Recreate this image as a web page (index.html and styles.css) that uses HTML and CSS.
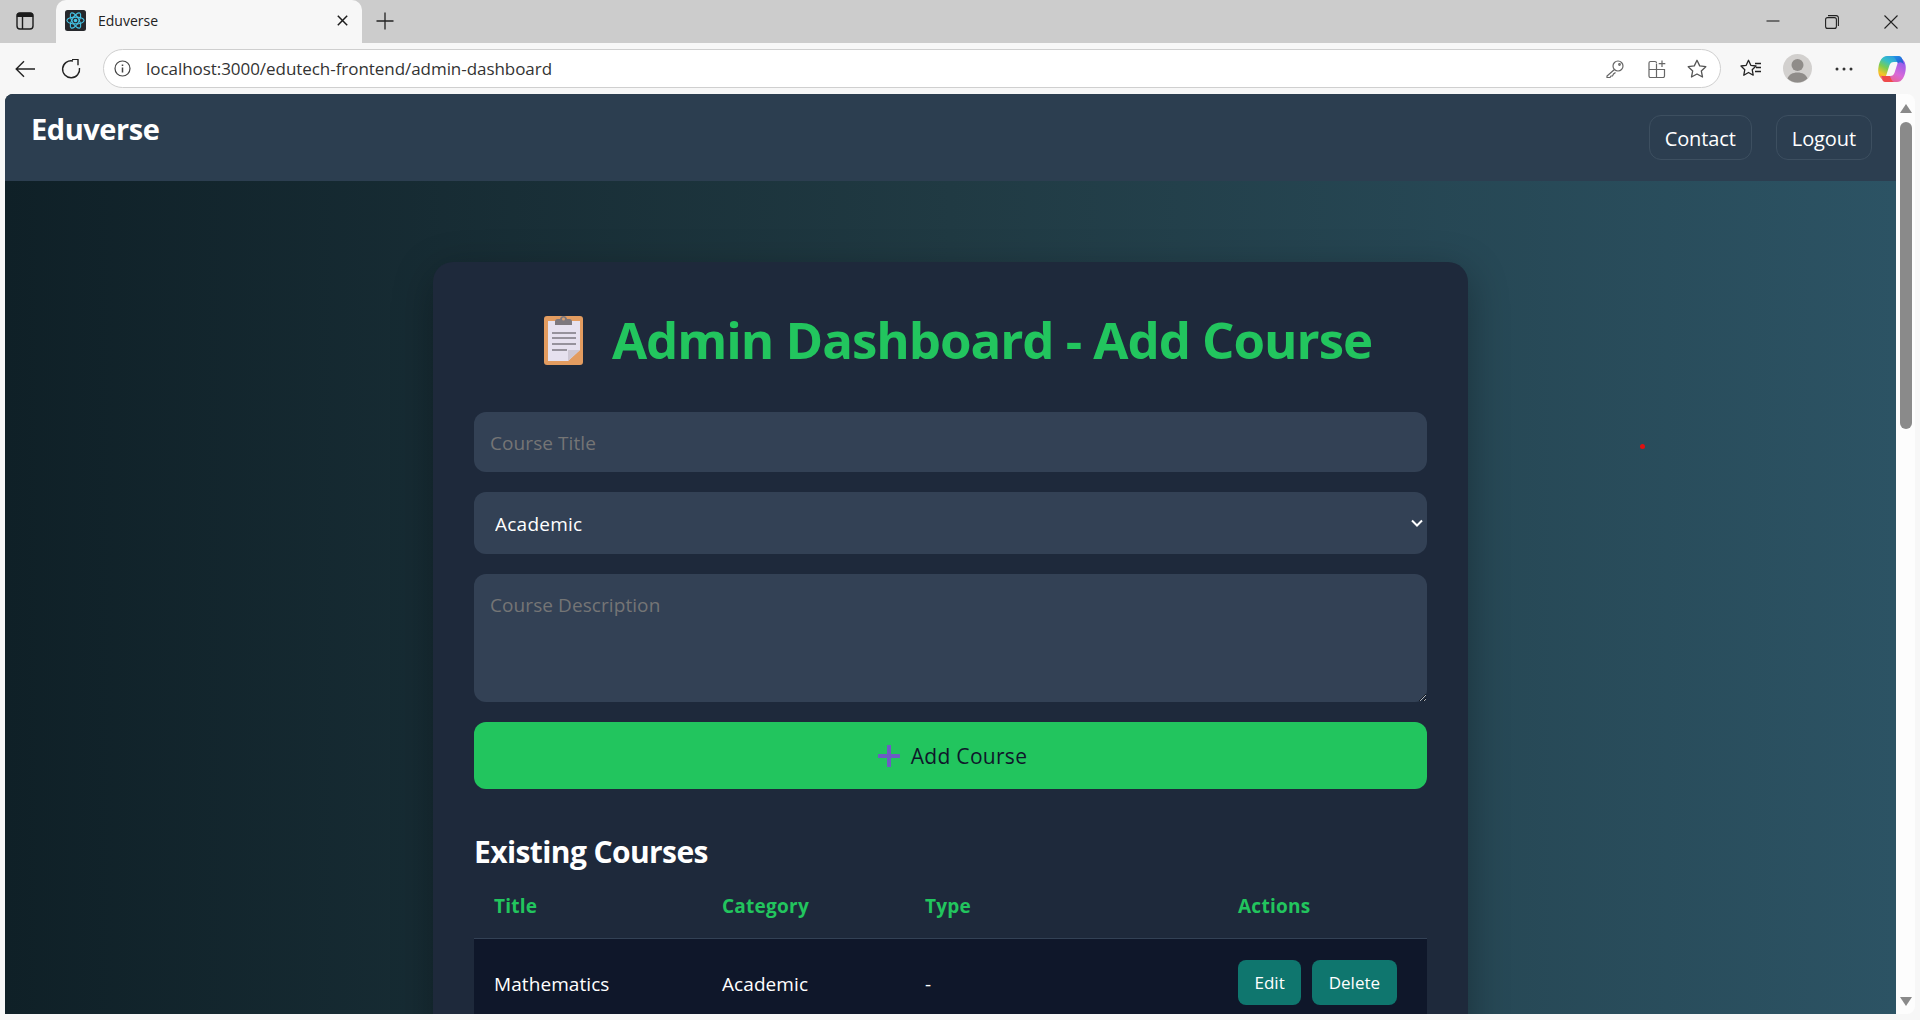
FILE: index.html
```html
<!DOCTYPE html>
<html lang="en">
<head>
  <meta charset="UTF-8" />
  <title>Eduverse</title>
  <link rel="stylesheet" href="styles.css">
</head>
<body>

<div class="browser">
  <!-- tab strip -->
  <div class="tabstrip">
    <svg class="sidebar-icon" width="18" height="18" viewBox="0 0 18 18" fill="none" stroke="#1c1c1c" stroke-width="1.4">
      <rect x="1" y="1" width="16" height="16" rx="3"/>
      <path d="M1.5 4.2h15V2.6L15 1.4H3L1.5 2.6z" fill="#1c1c1c"/>
      <path d="M6.5 4v13"/>
    </svg>
    <div class="tab">
      <svg class="favicon" width="21" height="21" viewBox="0 0 21 21" fill="none" stroke="#45c4e6" stroke-width="1.1">
        <rect width="21" height="21" rx="2.5" fill="#26282c" stroke="none"/>
        <ellipse cx="10.5" cy="10.5" rx="8.6" ry="3.4"/>
        <ellipse cx="10.5" cy="10.5" rx="8.6" ry="3.4" transform="rotate(60 10.5 10.5)"/>
        <ellipse cx="10.5" cy="10.5" rx="8.6" ry="3.4" transform="rotate(120 10.5 10.5)"/>
        <circle cx="10.5" cy="10.5" r="1.8" fill="#45c4e6" stroke="none"/>
      </svg>
      <span class="tab-title">Eduverse</span>
      <svg class="tab-close" width="11" height="11" viewBox="0 0 11 11" stroke="#1c1c1c" stroke-width="1.5"><path d="M.8.8l9.4 9.4M10.2.8L.8 10.2"/></svg>
    </div>
    <svg class="new-tab" width="18" height="18" viewBox="0 0 18 18" stroke="#222" stroke-width="1.3"><path d="M9 .5v17M.5 9h17"/></svg>
    <div class="window-controls">
      <svg width="14" height="14" viewBox="0 0 14 14" stroke="#222" stroke-width="1.1"><path d="M.5 6h13"/></svg>
      <svg width="14" height="14" viewBox="0 0 14 14" fill="none" stroke="#222" stroke-width="1.1"><rect x=".6" y="2.6" width="10.8" height="10.8" rx="2"/><path d="M3 .6h8.2a2.2 2.2 0 0 1 2.2 2.2V11"/></svg>
      <svg width="14" height="14" viewBox="0 0 14 14" stroke="#222" stroke-width="1.1"><path d="M.5.5l13 13M13.500.5l-13 13"/></svg>
    </div>
  </div>

  <!-- address bar row -->
  <div class="toolbar">
    <svg class="nav-back" width="20" height="18" viewBox="0 0 20 18" fill="none" stroke="#222" stroke-width="1.4"><path d="M20 9H1.500M9 1.200L1.200 9 9 16.800"/></svg>
    <svg class="nav-reload" width="20" height="20" viewBox="0 0 20 20" fill="none" stroke="#222" stroke-width="1.4"><path d="M12 2a8.500 8.500 0 1 0 6.500 7"/><path d="M11 .2h6v6"/></svg>
    <div class="address">
      <svg class="addr-info" width="17" height="17" viewBox="0 0 17 17" fill="none" stroke="#444" stroke-width="1.2"><circle cx="8.500" cy="8.500" r="7.500"/><path d="M8.500 7.500v5M8.500 4.500v1.600" stroke-width="1.500"/></svg>
      <span class="url">localhost:3000/edutech-frontend/admin-dashboard</span>
      <svg class="addr-key" width="18" height="18" viewBox="0 0 18 18" fill="none" stroke="#666" stroke-width="1.200"><circle cx="12" cy="6" r="5"/><path d="M8.500 9.500L1 16v1.500h3l1-1.500h1.500L7.500 14l2-1.500"/><circle cx="13.500" cy="4.500" r=".8"/></svg>
      <svg class="addr-apps" width="18" height="18" viewBox="0 0 18 18" fill="none" stroke="#666" stroke-width="1.200"><path d="M8.500 3.500v14M1 9.500h15.500V16a1.500 1.500 0 0 1-1.500 1.500H2.500A1.500 1.500 0 0 1 1 16V3a1.500 1.500 0 0 1 1.500-1.500H7A1.500 1.500 0 0 1 8.500 3M14 .5v6.500M10.700 3.700h6.600"/></svg>
      <svg class="addr-star" width="20" height="20" viewBox="0 0 20 20" fill="none" stroke="#555" stroke-width="1.300"><path d="M10 1.300l2.700 5.600 6.100.8-4.500 4.200 1.200 6.100-5.500-3-5.500 3 1.200-6.100L1.200 7.700l6.100-.8z" stroke-linejoin="round"/></svg>
    </div>
    <svg class="tool-fav" width="22" height="20" viewBox="0 0 22 20" fill="none" stroke="#222" stroke-width="1.300"><path d="M8.500 1.300l2.300 5 5.200.7-3.800 3.700 1 5.500-4.700-2.700-4.700 2.700 1-5.500L1 7l5.200-.7z" stroke-linejoin="round"/><path d="M15 4.500h6M16 8.500h5M15 12.500h6"/></svg>
    <div class="avatar">
      <svg width="29" height="29" viewBox="0 0 29 29"><circle cx="14.500" cy="14.500" r="14.500" fill="#d2d0ce"/><circle cx="14.500" cy="11" r="6" fill="#8f8c89"/><path d="M4.500 24.500c1.500-4 5-6 10-6s8.500 2 10 6a14.500 14.500 0 0 1-20 0z" fill="#8f8c89"/></svg>
    </div>
    <svg class="tool-dots" width="20" height="4" viewBox="0 0 20 4" fill="#333"><circle cx="3" cy="2" r="1.500"/><circle cx="10" cy="2" r="1.500"/><circle cx="17" cy="2" r="1.500"/></svg>
    <svg class="tool-copilot" width="30" height="28" viewBox="0 0 30 28">
      <defs>
        <linearGradient id="cpL" x1="0.8" y1="0" x2="0.2" y2="1"><stop offset="0" stop-color="#2a8fe8"/><stop offset=".35" stop-color="#35c0c8"/><stop offset=".6" stop-color="#7ccc50"/><stop offset=".85" stop-color="#f6c528"/><stop offset="1" stop-color="#f59a30"/></linearGradient>
        <linearGradient id="cpR" x1="0.8" y1="0" x2="0.2" y2="1"><stop offset="0" stop-color="#8a5cf0"/><stop offset=".55" stop-color="#d868d8"/><stop offset="1" stop-color="#f0607a"/></linearGradient>
        <linearGradient id="cpB" x1="0" y1="0" x2="1" y2="1"><stop offset="0" stop-color="#1f9be8"/><stop offset="1" stop-color="#2a4fd0"/></linearGradient>
      </defs>
      <path d="M10 1H21c2 0 3.500 1 4.200 3l1 3H17c-2.500 0-3.800 1-4.600 3.500L9.500 19.500C8.500 23 7 25 5 24 2 22 .5 17 1.500 12 2.500 6 5 1 10 1z" fill="url(#cpL)"/>
      <path d="M20 27H9c-2 0-3.500-1-4.200-3l-1-3H13c2.500 0 3.800-1 4.600-3.500L20.500 8.500C21.500 5 23 3 25 4 28 6 29.500 11 28.500 16 27.500 22 25 27 20 27z" fill="url(#cpR)"/>
      <path d="M15 1h6c2 0 3.500 1 4.200 3L27 9.500C25 7 22.500 6.600 21 8.500L19 5C18 3 17 1.500 15 1z" fill="url(#cpB)"/>
      <path d="M6 26c1 .7 2 1 3 1h8c-1.500-.6-2.400-1.800-3-3.500l-1.200-2.600c-.3.100-.5.100-.8.100H4.800l.8 3z" fill="#ee4a4a"/>
    </svg>
  </div>

  <div class="viewport">
    <div class="page">
      <nav class="navbar">
        <div class="brand">Eduverse</div>
        <div class="nav-links">
          <a class="nav-btn">Contact</a>
          <a class="nav-btn">Logout</a>
        </div>
      </nav>

      <div class="content">
        <span class="red-dot"></span>
        <div class="card">
          <h1 class="card-title">
            <svg class="clipboard" width="39" height="50" viewBox="0 0 39 50">
              <rect y="1" width="39" height="49" rx="3" fill="#e39c60"/>
              <path d="M4 6h32v29L24 46H4z" fill="#e6e1ef"/>
              <path d="M24 46V35h12z" fill="#cdc7d4"/>
              <path d="M11 10V6.500c0-1.500 1-2.500 2.500-2.500h2.500C16.500 0 22.500 0 23 4h2.500C27 4 28 5 28 6.500V10z" fill="#7d787e"/>
              <circle cx="19.500" cy="4" r="1.500" fill="#d9a070"/>
              <path d="M8 18h24M8 23h24M8 29h24M8 35h15" stroke="#96929c" stroke-width="1.800"/>
            </svg>
            <span>Admin Dashboard - Add Course</span>
          </h1>

          <form class="course-form">
            <input class="field" type="text" placeholder="Course Title">
            <select class="field field-select">
              <option>Academic</option>
              <option>Skill</option>
            </select>
            <textarea class="field field-area" placeholder="Course Description"></textarea>
            <button class="add-btn" type="button">
              <svg width="22" height="22" viewBox="0 0 22 22"><path d="M11 1v20M1 11h20" stroke="#6d5bc4" stroke-width="4" stroke-linecap="round"/></svg>
              <span>Add Course</span>
            </button>
          </form>

          <h2 class="section-title">Existing Courses</h2>
          <table class="course-table">
            <thead>
              <tr>
                <th class="col-title">Title</th>
                <th class="col-cat">Category</th>
                <th class="col-type">Type</th>
                <th class="col-act">Actions</th>
              </tr>
            </thead>
            <tbody>
              <tr>
                <td class="cell-text">Mathematics</td>
                <td class="cell-text">Academic</td>
                <td class="cell-text">-</td>
                <td>
                  <button class="row-btn">Edit</button>
                  <button class="row-btn">Delete</button>
                </td>
              </tr>
            </tbody>
          </table>
        </div>
      </div>
    </div>

    <div class="scrollbar">
      <span class="arrow-up"></span>
      <div class="thumb"></div>
      <span class="arrow-down"></span>
    </div>
  </div>
</div>

</body>
</html>
```

FILE: styles.css
```css
* {
  box-sizing: border-box;
}
html, body {
  margin: 0;
  height: 100%;
  overflow: hidden;
}
body {
  font-family: "Open Sans", "Noto Sans", sans-serif;
  background: #f7f7f7;
}
svg {
  display: block;
  flex: none;
}
.browser {
  display: flex;
  flex-direction: column;
  height: 1020px;
}

/* tab strip */
.tabstrip {
  height: 43px;
  background: #cccccc;
  display: flex;
  align-items: center;
  flex: none;
}
.sidebar-icon {
  margin: 0 22px 2px 16px;
}
.tab {
  width: 306px;
  height: 43px;
  background: #f7f7f7;
  border-radius: 10px 10px 0 0;
  display: flex;
  align-items: center;
  padding: 0 0 2px 9px;
}
.tab-title {
  font-size: 14px;
  color: #222;
  margin-left: 12px;
}
.tab-close {
  margin-left: auto;
  margin-right: 14px;
}
.new-tab {
  margin: 0 0 2px 14px;
}
.window-controls {
  margin-left: auto;
  display: flex;
  align-items: center;
  gap: 45px;
  padding-right: 22px;
}

/* toolbar */
.toolbar {
  height: 51px;
  display: flex;
  align-items: center;
  flex: none;
  background: #f7f7f7;
}
.nav-back {
  margin-left: 15px;
}
.nav-reload {
  margin-left: 26px;
}
.address {
  margin-left: 22px;
  width: 1618px;
  height: 39px;
  background: #fff;
  border: 1px solid #cfcfcf;
  border-radius: 20px;
  display: flex;
  align-items: center;
  padding-left: 10px;
}
.url {
  font-size: 17px;
  color: #333;
  margin-left: 15px;
  letter-spacing: -0.05px;
}
.addr-key {
  margin-left: auto;
  margin-right: 2px;
}
.addr-apps {
  margin-left: 22px;
}
.addr-star {
  margin-left: 21px;
  margin-right: 13px;
}
.tool-fav {
  margin-left: 19px;
}
.avatar {
  margin-left: 21px;
}
.tool-dots {
  margin-left: 22px;
}
.tool-copilot {
  margin-left: 23px;
}

/* page area */
.viewport {
  flex: 1;
  min-height: 0;
  display: flex;
  padding: 0 5px 6px 5px;
}
.page {
  flex: 1;
  min-width: 0;
  overflow: hidden;
  border-radius: 8px 0 0 0;
  background: linear-gradient(to right, #0f2027, #203a43, #2c5364);
  color: #fff;
}
.scrollbar {
  width: 19px;
  flex: none;
  background: #fdfdfd;
  border-radius: 0 8px 8px 0;
  display: flex;
  flex-direction: column;
  align-items: center;
  padding-top: 10px;
}
.arrow-up {
  width: 0;
  height: 0;
  border-left: 6px solid transparent;
  border-right: 6px solid transparent;
  border-bottom: 9px solid #8a8a8a;
}
.thumb {
  width: 12px;
  height: 307px;
  background: #8a8a8a;
  border-radius: 6px;
  margin-top: 9px;
}
.arrow-down {
  width: 0;
  height: 0;
  border-left: 6px solid transparent;
  border-right: 6px solid transparent;
  border-top: 9px solid #8a8a8a;
  margin-top: auto;
  margin-bottom: 8px;
}

/* navbar */
.navbar {
  height: 87px;
  background: #2c3e50;
  display: flex;
  justify-content: space-between;
  align-items: flex-start;
  padding: 21px 24px 21px 26px;
}
.brand {
  font-size: 29px;
  font-weight: 700;
  line-height: 40px;
  letter-spacing: -0.45px;
  margin-top: -6px;
}
.nav-links {
  display: flex;
  gap: 24px;
}
.nav-btn {
  height: 45px;
  display: flex;
  align-items: center;
  padding: 2px 15px 0;
  font-size: 20px;
  letter-spacing: -0.1px;
  border: 1px solid #3d4f60;
  border-radius: 12px;
}

/* main */
.content {
  position: relative;
  display: flex;
  justify-content: center;
  padding-top: 81px;
}
.red-dot {
  position: absolute;
  left: 1635px;
  top: 263px;
  width: 5px;
  height: 5px;
  border-radius: 50%;
  background: #e01010;
}
.card {
  width: 1035px;
  background: #1e293b;
  border-radius: 20px;
  padding: 41px 41px 40px;
  box-shadow: 0 10px 40px rgba(0,0,0,0.3);
}
.card-title {
  margin: 0 0 35px;
  height: 74px;
  padding-bottom: 2px;
  display: flex;
  align-items: center;
  justify-content: center;
  color: #22c55e;
  font-size: 51px;
  font-weight: 700;
  letter-spacing: -1.05px;
}
.clipboard {
  margin: 2px 29px 0 15px;
}
.course-form {
  display: flex;
  flex-direction: column;
  gap: 20px;
}
.field {
  display: block;
  width: 100%;
  height: 60px;
  padding: 2px 16px 0;
  background: #334155;
  border: none;
  border-radius: 12px;
  color: #fff;
  font-family: inherit;
  font-size: 19px;
  letter-spacing: 0.08px;
  outline: none;
}
.field::placeholder {
  color: #757575;
}
.field-select {
  height: 62px;
  padding: 1px 21px 0;
  letter-spacing: 0.25px;
  appearance: none;
  background-image: url("data:image/svg+xml,%3Csvg xmlns='http://www.w3.org/2000/svg' width='12' height='8'%3E%3Cpath d='M1 1.500l5 5 5-5' fill='none' stroke='white' stroke-width='2'/%3E%3C/svg%3E");
  background-repeat: no-repeat;
  background-position: right 4px center;
}
.field-area {
  height: 128px;
  padding-top: 18px;
}
.add-btn {
  height: 67px;
  display: flex;
  align-items: center;
  justify-content: center;
  gap: 11px;
  padding-left: 10px;
  background: #22c55e;
  border: none;
  border-radius: 12px;
  color: #0f172a;
  font-family: inherit;
  font-size: 21px;
  letter-spacing: 0.3px;
}
.section-title {
  margin: 42px 0 0;
  font-size: 30px;
  line-height: 41px;
  font-weight: 700;
  letter-spacing: -0.6px;
}
.course-table {
  width: 100%;
  border-collapse: collapse;
  table-layout: fixed;
}
.course-table th {
  height: 66px;
  padding: 2px 20px 0;
  text-align: left;
  color: #22c55e;
  font-size: 19px;
  font-weight: 700;
  letter-spacing: 0.25px;
  border-bottom: 1px solid #334155;
}
.col-title { width: 228px; }
.col-cat { width: 203px; }
.col-type { width: 313px; }
.col-act { width: 209px; }
.course-table td {
  padding: 21px 20px;
  background: #0f172a;
  font-size: 19px;
  letter-spacing: 0.08px;
}
.course-table .cell-text {
  padding-top: 24px;
}
.row-btn {
  height: 45px;
  padding: 1px 16.5px 0;
  margin-right: 6px;
  background: #0f766e;
  border: none;
  border-radius: 8px;
  color: #fff;
  font-family: inherit;
  font-size: 17px;
}
```
